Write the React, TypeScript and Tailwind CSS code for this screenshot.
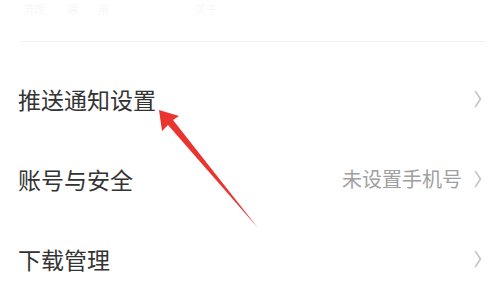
import React from "react";

type Row = { label: string; value?: string };

const rows: Row[] = [
  { label: "推送通知设置" },
  { label: "账号与安全", value: "未设置手机号" },
  { label: "下载管理" },
];

function Chevron() {
  return (
    <svg width="8" height="18" viewBox="0 0 8 18" fill="none">
      <path d="M1.5 1.5 L6.5 9 L1.5 16.5" stroke="#c6c6c6" strokeWidth="1.6" strokeLinecap="round" strokeLinejoin="round" />
    </svg>
  );
}

export default function App() {
  return (
    <div
      className="relative w-[499px] h-[285px] overflow-hidden bg-white"
      style={{ fontFamily: '"Noto Sans CJK SC", "Noto Sans", sans-serif' }}
    >
      {/* faded header remains */}
      <div className="h-[41px] pl-[23px] pt-[2px] flex items-start text-[11px] leading-[14px] text-[#f7f7f7]">
        <span className="w-[44px]">清理</span>
        <span className="w-[31px]">通</span>
        <span className="w-[97px]">用</span>
        <span>关于</span>
      </div>
      <div className="ml-[20px] mr-[14px] border-t-[1.5px] border-[#f1f1f1]" />
      <div className="h-[17px]" />

      {rows.map((r) => (
        <div key={r.label} className="h-[80px] pl-[18px] pr-[17px] flex items-center justify-between">
          <span className="text-[23px] leading-none text-[#333333]">{r.label}</span>
          <div className="flex items-center gap-[12px]">
            {r.value && <span className="text-[20px] leading-none text-[#a0a0a0]">{r.value}</span>}
            <Chevron />
          </div>
        </div>
      ))}

      {/* red annotation arrow */}
      <svg className="absolute left-0 top-0 pointer-events-none" width="499" height="285">
        <polygon
          points="159,110 162,131 168,125 258,228 173,120 179,116"
          fill="#ea3430"
        />
      </svg>
    </div>
  );
}
